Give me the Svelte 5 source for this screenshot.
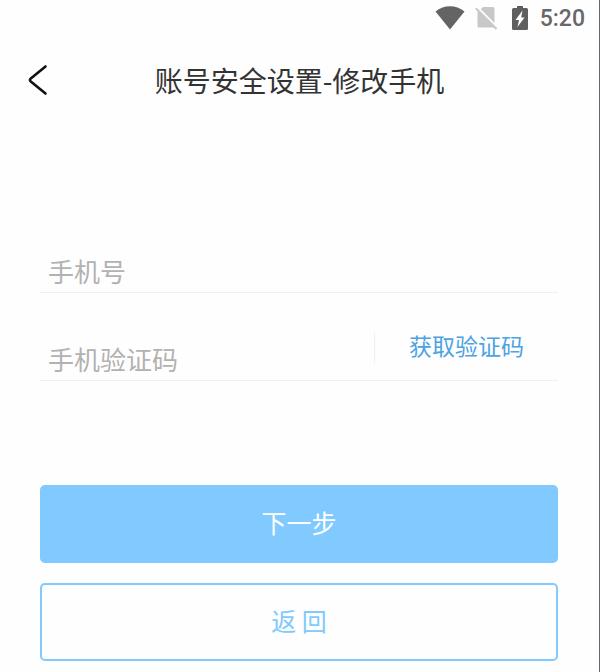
<script>
	let phone = $state('');
	let code = $state('');

	function submit(e) {
		e.preventDefault();
	}
</script>

<div class="screen">
	<div class="status">
		<svg width="30" height="24" viewBox="0 0 30 24">
			<path d="M0.500 5.500C9 -1.500 21 -1.500 29.500 5.500L15 23.500Z" fill="#646464" />
		</svg>
		<svg class="sim" width="22" height="24" viewBox="0 0 22 24">
			<path d="M8 1H18Q19.500 1 19.500 2.500V21.500H4Q2.500 21.500 2.500 20V6Z" fill="#c8c8c8" />
			<path d="M1.500 0.500L22 21" stroke="#fefefe" stroke-width="2.200" />
			<path d="M0.800 2.300L21.500 23" stroke="#c8c8c8" stroke-width="2" />
		</svg>
		<svg class="battery" width="16" height="24" viewBox="0 0 16 24">
			<path d="M5 0H11V2H14.500Q16 2 16 3.500V22.500Q16 24 14.500 24H1.500Q0 24 0 22.500V3.500Q0 2 1.500 2H5Z" fill="#5f5f5f" />
			<path d="M10.500 4.500L3.500 14H7L5.500 21L12.500 11.500H9.200Z" fill="#fff" />
		</svg>
		<span>5:20</span>
	</div>

	<header>
		<button class="back" type="button" aria-label="返回">
			<svg width="20" height="32" viewBox="0 0 20 32">
				<path d="M17.500 2.500L2.800 14.500Q1 16 2.800 17.500L17.500 29.500" fill="none" stroke="#111" stroke-width="2.600" stroke-linecap="round" />
			</svg>
		</button>
		<h1>账号安全设置-修改手机</h1>
	</header>

	<form onsubmit={submit}>
		<div class="field">
			<input type="tel" aria-label="手机号" placeholder="手机号" bind:value={phone} />
		</div>
		<div class="field">
			<input type="text" aria-label="手机验证码" placeholder="手机验证码" bind:value={code} />
			<button class="get-code" type="button">获取验证码</button>
		</div>
		<button class="btn next" type="submit">下一步</button>
		<button class="btn return" type="button">返 回</button>
	</form>
</div>

<style>
	:global(body) {
		margin: 0;
		background: #fefefe;
	}
	.screen {
		box-sizing: border-box;
		min-height: 100vh;
		padding-bottom: 10px;
		border-right: 1px solid #66666b;
		font-family: "Noto Sans CJK SC", sans-serif;
	}
	button, input {
		margin: 0;
		padding: 0;
		border: 0;
		background: none;
		font-family: inherit;
	}
	button {
		cursor: pointer;
	}
	svg {
		display: block;
	}
	.status {
		display: flex;
		justify-content: flex-end;
		align-items: center;
		height: 36px;
		padding-right: 14px;
		color: #686868;
		font: 500 23px/36px Roboto, sans-serif;
	}
	.status span {
		padding-top: 2px;
	}
	.sim {
		margin-left: 10px;
	}
	.battery {
		margin: 0 12px 0 15px;
	}
	header {
		display: grid;
		grid-template-columns: 60px 1fr 60px;
		align-items: center;
		height: 88px;
	}
	.back {
		padding-left: 28px;
	}
	h1 {
		margin: 0;
		color: #333;
		font-size: 28px;
		font-weight: 400;
		line-height: 40px;
		text-align: center;
	}
	form {
		padding: 81px 41px 0 40px;
	}
	.field {
		display: flex;
		align-items: flex-end;
		box-sizing: border-box;
		height: 88px;
		border-bottom: 1px solid #f0f0f0;
	}
	.field input {
		flex: 1;
		min-width: 0;
		height: 44px;
		padding-left: 8px;
		color: #333;
		font-size: 26px;
		outline: none;
	}
	.field input::placeholder {
		color: #b2b2b2;
		opacity: 1;
	}
	.get-code {
		width: 184px;
		height: 32px;
		margin-bottom: 16px;
		padding-bottom: 6px;
		border-left: 1px solid #f0f0f0;
		color: #4ba3e3;
		font-size: 23px;
		line-height: 26px;
	}
	.btn {
		display: block;
		box-sizing: border-box;
		width: 100%;
		height: 78px;
		padding-bottom: 4px;
		border: 2px solid #80caff;
		border-radius: 5px;
		font-size: 25px;
	}
	.next {
		margin-top: 104px;
		background: #80caff;
		color: #fff;
	}
	.return {
		margin-top: 20px;
		color: #80caff;
	}
</style>
